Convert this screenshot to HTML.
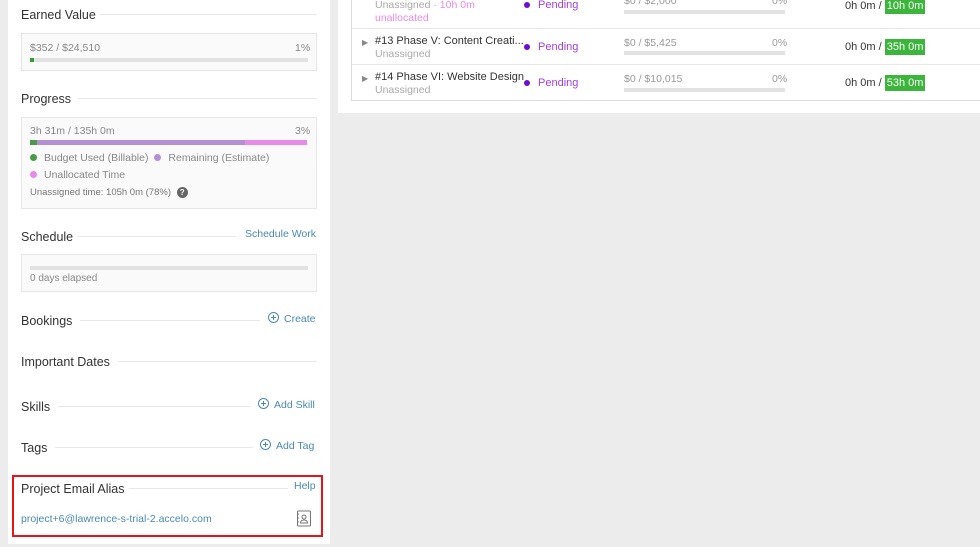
<!DOCTYPE html>
<html><head><style>
*{margin:0;padding:0;box-sizing:border-box}
body{width:980px;height:547px;background:#ececec;font-family:"Liberation Sans",sans-serif;position:relative;overflow:hidden;font-size:12px}
.a{position:absolute}
.h{position:absolute;left:21px;font-size:12.5px;color:#333}
.ln{position:absolute;height:1px;background:#e8e8e8}
.box{position:absolute;left:21px;width:296px;border:1px solid #e6e6e6;background:#fafafa}
.g{color:#888}
.lk{color:#4a89b0}
.bar{position:absolute;height:4px;background:#e2e2e2}
.dot{display:inline-block;width:7px;height:7px;border-radius:50%;margin-right:7px}
.plus{display:inline-block;width:11px;height:11px;border:1px solid #4a89b0;border-radius:50%;position:relative;vertical-align:-1px;margin-right:5px}
.plus:before{content:"";position:absolute;left:2px;top:4px;width:5px;height:1px;background:#4a89b0}
.plus:after{content:"";position:absolute;left:4px;top:2px;width:1px;height:5px;background:#4a89b0}
.tag{background:#3bb53b;color:#fff;padding:2px 2px}
</style></head><body>
<div class="a" style="left:8px;top:0;width:322px;height:544px;background:#fff"></div>
<div class="a" style="left:338px;top:0;width:642px;height:113px;background:#fff"></div>
<div class="a" style="left:351px;top:-1px;width:640px;height:102px;border:1px solid #ddd"></div>
<div class="ln" style="left:352px;top:28px;width:628px"></div>
<div class="ln" style="left:352px;top:64px;width:628px"></div>

<div class="a g" style="left:375px;top:-1px;font-size:10.5px;color:#aaa">Unassigned · <span style="color:#e88ae8">10h 0m</span></div>
<div class="a" style="left:375px;top:12px;font-size:10.5px;color:#e88ae8">unallocated</div>
<div class="a" style="left:362px;top:38px;font-size:8px;color:#888">▶</div>
<div class="a" style="left:375px;top:35px;font-size:11px;color:#333">#13 Phase V: Content Creati...</div>
<div class="a" style="left:375px;top:48px;font-size:10.5px;color:#aaa">Unassigned</div>
<div class="a" style="left:362px;top:74px;font-size:8px;color:#888">▶</div>
<div class="a" style="left:375px;top:71px;font-size:11px;color:#333">#14 Phase VI: Website Design</div>
<div class="a" style="left:375px;top:84px;font-size:10.5px;color:#aaa">Unassigned</div>
<div class="a" style="left:524px;top:-1px;font-size:11px;color:#a040e0"><span class="dot" style="background:#6a10d0;width:6px;height:6px;margin-right:8px"></span>Pending</div>
<div class="a" style="left:524px;top:41px;font-size:11px;color:#a040e0"><span class="dot" style="background:#6a10d0;width:6px;height:6px;margin-right:8px"></span>Pending</div>
<div class="a" style="left:524px;top:77px;font-size:11px;color:#a040e0"><span class="dot" style="background:#6a10d0;width:6px;height:6px;margin-right:8px"></span>Pending</div>
<div class="a" style="left:624px;top:-5px;font-size:10.5px;color:#999">$0 / $2,000</div><div class="a" style="left:772px;top:-5px;font-size:10.5px;color:#999">0%</div>
<div class="bar" style="left:624px;top:10px;width:161px"></div>
<div class="a" style="left:624px;top:37px;font-size:10.5px;color:#999">$0 / $5,425</div><div class="a" style="left:772px;top:37px;font-size:10.5px;color:#999">0%</div>
<div class="bar" style="left:624px;top:51px;width:161px"></div>
<div class="a" style="left:624px;top:73px;font-size:10.5px;color:#999">$0 / $10,015</div><div class="a" style="left:772px;top:73px;font-size:10.5px;color:#999">0%</div>
<div class="bar" style="left:624px;top:88px;width:161px"></div>
<div class="a" style="left:845px;top:0px;font-size:11px;color:#333">0h 0m / <span class="tag">10h 0m</span></div>
<div class="a" style="left:845px;top:41px;font-size:11px;color:#333">0h 0m / <span class="tag">35h 0m</span></div>
<div class="a" style="left:845px;top:77px;font-size:11px;color:#333">0h 0m / <span class="tag">53h 0m</span></div>

<div class="h" style="top:8px">Earned Value</div><div class="ln" style="left:100px;top:14px;width:217px"></div>
<div class="box" style="top:33px;height:38px"></div>
<div class="a g" style="left:30px;top:42px;font-size:10.5px">$352 / $24,510</div>
<div class="a g" style="left:295px;top:42px;font-size:10.5px">1%</div>
<div class="bar" style="left:30px;top:58px;width:278px"></div>
<div class="a" style="left:30px;top:58px;width:4px;height:4px;background:#3a9a3a"></div>

<div class="h" style="top:92px">Progress</div><div class="ln" style="left:78px;top:98px;width:239px"></div>
<div class="box" style="top:117px;height:92px"></div>
<div class="a g" style="left:30px;top:125px;font-size:10.5px">3h 31m / 135h 0m</div>
<div class="a g" style="left:295px;top:125px;font-size:10.5px">3%</div>
<div class="a" style="left:30px;top:140px;width:7px;height:5px;background:#4a9a4a"></div>
<div class="a" style="left:37px;top:140px;width:208px;height:5px;background:#b48fd6"></div>
<div class="a" style="left:245px;top:140px;width:62px;height:5px;background:#e88ae8"></div>
<div class="a g" style="left:30px;top:152px;font-size:10.5px"><span class="dot" style="background:#4a9a4a"></span>Budget Used (Billable) <span class="dot" style="background:#b48fd6;margin-left:3px"></span>Remaining (Estimate)</div>
<div class="a g" style="left:30px;top:169px;font-size:10.5px"><span class="dot" style="background:#e88ae8"></span>Unallocated Time</div>
<div class="a" style="left:30px;top:187px;font-size:9.5px;color:#777">Unassigned time: 105h 0m (78%) <span style="display:inline-block;width:11px;height:11px;border-radius:50%;background:#666;color:#fff;text-align:center;font-size:8px;line-height:11px;font-weight:bold;margin-left:3px">?</span></div>

<div class="h" style="top:230px">Schedule</div><div class="ln" style="left:78px;top:236px;width:158px"></div>
<div class="a lk" style="left:245px;top:228px;font-size:10.5px">Schedule Work</div>
<div class="box" style="top:254px;height:38px"></div>
<div class="bar" style="left:30px;top:266px;width:278px"></div>
<div class="a g" style="left:30px;top:273px;font-size:10px">0 days elapsed</div>

<div class="h" style="top:314px">Bookings</div><div class="ln" style="left:80px;top:320px;width:180px"></div>
<div class="a lk" style="left:268px;top:312px;font-size:10.5px"><span class="plus"></span>Create</div>
<div class="h" style="top:355px">Important Dates</div><div class="ln" style="left:118px;top:361px;width:199px"></div>
<div class="h" style="top:400px">Skills</div><div class="ln" style="left:58px;top:406px;width:193px"></div>
<div class="a lk" style="left:258px;top:398px;font-size:10.5px"><span class="plus"></span>Add Skill</div>
<div class="h" style="top:441px">Tags</div><div class="ln" style="left:55px;top:447px;width:198px"></div>
<div class="a lk" style="left:260px;top:439px;font-size:10.5px"><span class="plus"></span>Add Tag</div>

<div class="a" style="left:12px;top:475px;width:311px;height:62px;border:2px solid #e8141a"></div>
<div class="h" style="top:482px">Project Email Alias</div><div class="ln" style="left:129px;top:488px;width:159px"></div>
<div class="a lk" style="left:294px;top:480px;font-size:10.5px">Help</div>
<div class="a lk" style="left:21px;top:513px;font-size:10.5px">project+6@lawrence-s-trial-2.accelo.com</div>
<svg class="a" style="left:296px;top:510px" width="16" height="17" viewBox="0 0 16 17"><rect x="1.5" y="1" width="13" height="15" rx="1" fill="none" stroke="#777"/><line x1="1" y1="4" x2="3" y2="4" stroke="#777"/><line x1="1" y1="8" x2="3" y2="8" stroke="#777"/><line x1="1" y1="12" x2="3" y2="12" stroke="#777"/><circle cx="8" cy="7" r="2" fill="none" stroke="#777"/><path d="M4.5 13c0-2 1.5-3 3.5-3s3.5 1 3.5 3z" fill="none" stroke="#777"/></svg>
</body></html>
